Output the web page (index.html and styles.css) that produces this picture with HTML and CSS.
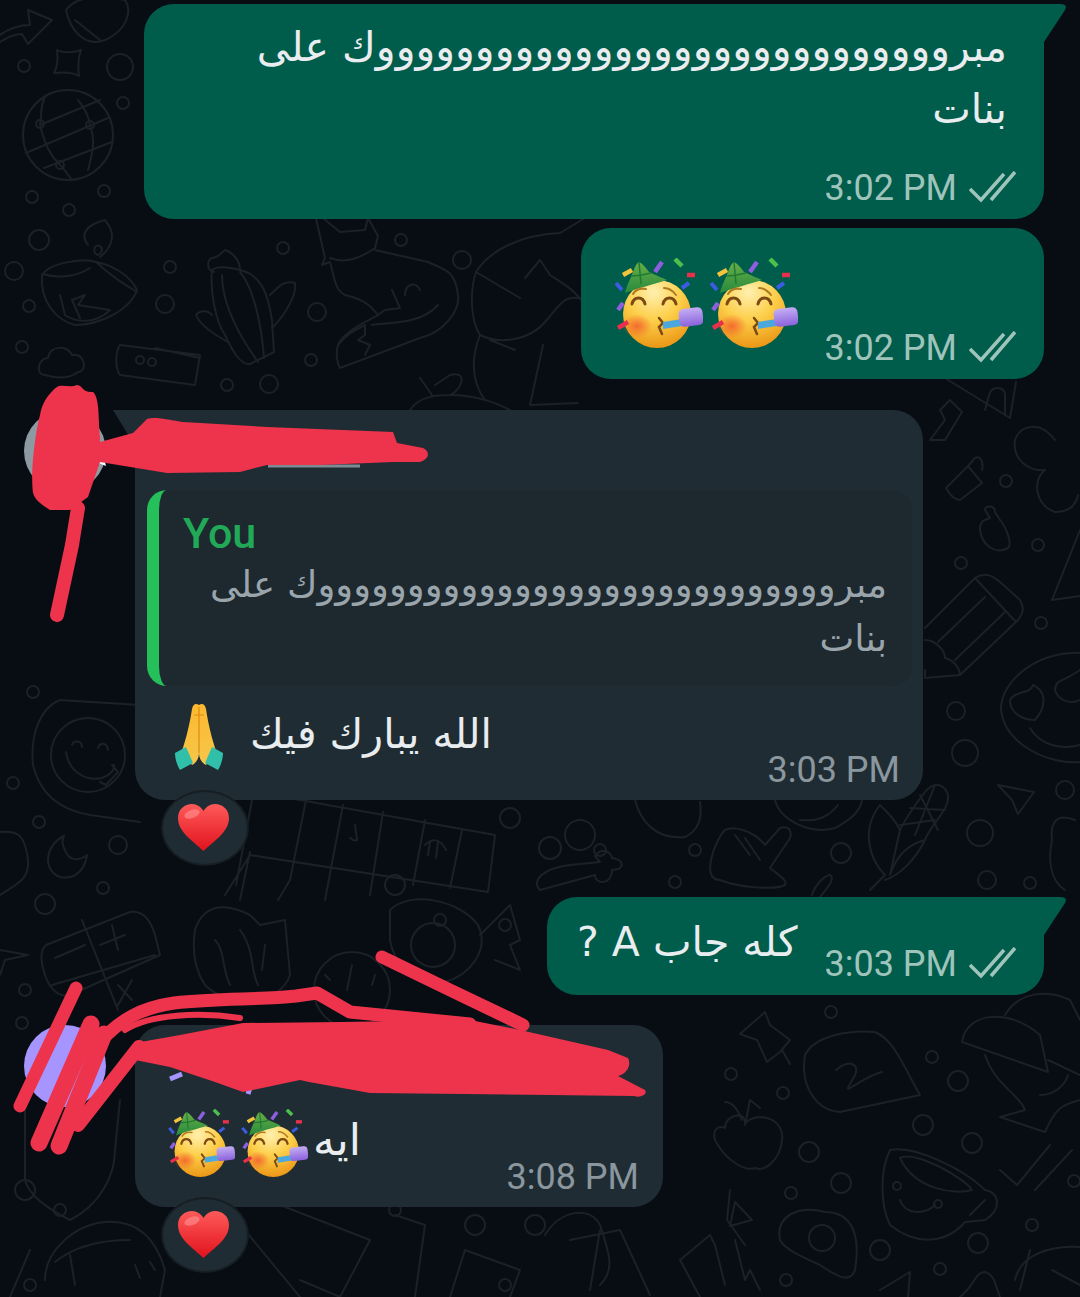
FILE: index.html
```html
<!DOCTYPE html>
<html lang="en">
<head>
    <meta charset="UTF-8">
    <meta name="viewport" content="width=device-width, initial-scale=1.0">
    <title>Chat</title>
    <link rel="stylesheet" href="styles.css">
</head>
<body>
    <!-- shared drawings -->
    <svg class="defs" aria-hidden="true">
        <defs>
            <radialGradient id="faceFill" cx="0.45" cy="0.18" r="0.9">
                <stop offset="0" stop-color="#fff0b0"/>
                <stop offset="0.45" stop-color="#fdcf4a"/>
                <stop offset="1" stop-color="#e88c0c"/>
            </radialGradient>
            <radialGradient id="cheekFill">
                <stop offset="0" stop-color="#f4582c" stop-opacity="0.8"/>
                <stop offset="1" stop-color="#f4582c" stop-opacity="0"/>
            </radialGradient>
            <linearGradient id="hatFill" x1="0" y1="0" x2="0" y2="1">
                <stop offset="0" stop-color="#6aae48"/>
                <stop offset="1" stop-color="#268a3c"/>
            </linearGradient>
            <linearGradient id="heartFill" x1="0" y1="0" x2="0" y2="1">
                <stop offset="0" stop-color="#ff5a5a"/>
                <stop offset="1" stop-color="#e0121c"/>
            </linearGradient>
            <linearGradient id="handFill" x1="0" y1="0" x2="0" y2="1">
                <stop offset="0" stop-color="#fdb92e"/>
                <stop offset="1" stop-color="#f6c64a"/>
            </linearGradient>
            <linearGradient id="rollFill" x1="0" y1="0" x2="0" y2="1">
                <stop offset="0" stop-color="#c4aef4"/>
                <stop offset="1" stop-color="#8a62dc"/>
            </linearGradient>
            <symbol id="party" viewBox="0 0 90 90">
                <circle cx="44" cy="56" r="34" fill="url(#faceFill)"/>
                <ellipse cx="24" cy="68" rx="15" ry="12" fill="url(#cheekFill)"/>
                <path d="M12 35 C14 26 18 20 20 14 C22 8 24 5 26 4 C30 6 33 10 36 14 C42 17 50 20 54 22 C42 26 25 30 12 35Z" fill="url(#hatFill)"/>
                <path d="M26 4 L28 26 M18 18 C26 18 34 16 38 15" stroke="#1f7a32" stroke-width="1.5" fill="none"/>
                <path d="M10 17 L19 12" stroke="#f2c43c" stroke-width="4.5"/>
                <path d="M42 14 L49 4" stroke="#8d5fe0" stroke-width="4.5"/>
                <path d="M62 1 L69 8" stroke="#4cc04c" stroke-width="4.5"/>
                <path d="M74 17 H82" stroke="#e8304c" stroke-width="4.5"/>
                <path d="M69 30 L76 25" stroke="#3a5ce0" stroke-width="4"/>
                <path d="M3 25 L9 32" stroke="#3a5ce0" stroke-width="4"/>
                <path d="M5 52 L10 45" stroke="#8d5fe0" stroke-width="4.5"/>
                <path d="M5 70 L15 64" stroke="#e8304c" stroke-width="4.5"/>
                <path d="M19 46 C21 38 30 38 32 46 M50 46 C52 38 61 38 63 46" stroke="#7c4a12" stroke-width="3" fill="none" stroke-linecap="round"/>
                <path d="M20 36 C23 31 28 30 33 31 M51 30 C56 30 60 33 63 37" stroke="#b07a20" stroke-width="2" fill="none" stroke-linecap="round"/>
                <path d="M46 60 L50 65 L46 69 L49 76" stroke="#7c4a12" stroke-width="2.5" fill="none" stroke-linecap="round"/>
                <path d="M50 64 L69 61 L69 68 L50 71Z" fill="#4aa8dc"/>
                <rect x="66" y="50" width="24" height="18" rx="5" transform="rotate(-7 78 59)" fill="url(#rollFill)"/>
            </symbol>
            <symbol id="heart" viewBox="0 0 53 48">
                <path d="M26.5 47 C16 37 1 28 1 14 C1 5 8 0 15 0 C20 0 24 3 26.5 7 C29 3 33 0 38 0 C45 0 52 5 52 14 C52 28 37 37 26.5 47Z" fill="url(#heartFill)"/>
                <ellipse cx="15" cy="10" rx="8" ry="4" fill="#ff9a9a" opacity="0.55" transform="rotate(-20 15 10)"/>
            </symbol>
        </defs>
    </svg>

    <!-- wallpaper doodles -->
    <svg class="doodles" viewBox="0 0 1080 1297" aria-hidden="true">
        <g fill="none" stroke="#1b2127" stroke-width="2" stroke-linecap="round" stroke-linejoin="round">
            <!-- dots -->
            <circle cx="24" cy="66" r="6"/><circle cx="120" cy="67" r="13"/><circle cx="123" cy="103" r="6"/>
            <circle cx="32" cy="197" r="6"/><circle cx="104" cy="191" r="6"/><circle cx="69" cy="210" r="6"/>
            <circle cx="39" cy="240" r="10"/><circle cx="14" cy="271" r="9"/><circle cx="29" cy="306" r="6"/>
            <circle cx="22" cy="347" r="6"/><circle cx="170" cy="267" r="6"/><circle cx="165" cy="304" r="9"/>
            <circle cx="283" cy="248" r="6"/><circle cx="317" cy="312" r="9"/><circle cx="311" cy="360" r="6"/>
            <circle cx="227" cy="385" r="6"/><circle cx="269" cy="384" r="9"/><circle cx="401" cy="240" r="6"/>
            <circle cx="462" cy="260" r="9"/><circle cx="1006" cy="481" r="6"/><circle cx="1038" cy="545" r="6"/>
            <circle cx="961" cy="563" r="6"/><circle cx="1041" cy="623" r="6"/><circle cx="956" cy="711" r="9"/>
            <circle cx="965" cy="753" r="13"/><circle cx="1065" cy="790" r="9"/><circle cx="980" cy="833" r="13"/>
            <circle cx="987" cy="880" r="9"/><circle cx="1030" cy="883" r="6"/><circle cx="33" cy="692" r="6"/>
            <circle cx="13" cy="783" r="6"/><circle cx="39" cy="822" r="6"/><circle cx="118" cy="845" r="9"/>
            <circle cx="103" cy="888" r="6"/><circle cx="45" cy="904" r="10"/><circle cx="25" cy="990" r="6"/>
            <circle cx="22" cy="1023" r="6"/><circle cx="831" cy="1012" r="6"/><circle cx="731" cy="1074" r="6"/>
            <circle cx="783" cy="1093" r="6"/><circle cx="932" cy="1057" r="6"/><circle cx="958" cy="1081" r="10"/>
            <circle cx="923" cy="1125" r="10"/><circle cx="972" cy="1143" r="10"/><circle cx="809" cy="1152" r="10"/>
            <circle cx="841" cy="1183" r="10"/><circle cx="791" cy="1193" r="6"/><circle cx="1074" cy="1181" r="6"/>
            <circle cx="1032" cy="1225" r="6"/><circle cx="978" cy="1243" r="10"/><circle cx="880" cy="1250" r="10"/>
            <circle cx="940" cy="1269" r="6"/><circle cx="786" cy="1280" r="6"/><circle cx="600" cy="850" r="6"/>
            <circle cx="695" cy="850" r="6"/><circle cx="675" cy="882" r="6"/><circle cx="841" cy="853" r="10"/>
            <circle cx="510" cy="818" r="10"/><circle cx="535" cy="1225" r="10"/><circle cx="395" cy="885" r="10"/>
            <circle cx="440" cy="920" r="6"/><circle cx="505" cy="925" r="6"/><circle cx="25" cy="1190" r="10"/>
            <circle cx="60" cy="1210" r="6"/><circle cx="395" cy="1210" r="6"/><circle cx="475" cy="1225" r="10"/>
            <circle cx="505" cy="1285" r="6"/><circle cx="30" cy="1285" r="6"/>
            <!-- globe -->
            <circle cx="68" cy="135" r="45"/>
            <path d="M40 125 L100 100 M26 153 L108 118 M44 168 L112 142 M40 125 C42 112 40 105 46 95 M40 125 C45 145 50 155 60 165 M90 125 C88 112 82 105 78 100 M90 125 C96 142 92 155 88 170 M60 165 C65 170 68 175 72 180"/>
            <circle cx="40" cy="124" r="4"/><circle cx="90" cy="125" r="4"/><circle cx="60" cy="165" r="4"/>
            <!-- sparkle and top shapes -->
            <path d="M57 50 C62 53 74 53 81 50 C78 58 78 68 79 76 C72 72 62 72 54 73 C58 66 58 58 57 50Z"/>
            <path d="M0 35 C10 28 20 25 30 25 L28 10 L52 20 L28 44 L22 34 C14 34 6 38 0 42"/>
            <path d="M66 10 C75 -2 95 -6 125 0 C132 10 128 30 105 40 C85 48 70 30 66 10Z M75 20 L100 40"/>
            <!-- lamp -->
            <path d="M88 245 C80 235 85 225 105 220 C115 232 115 245 100 257 M95 247 C92 255 100 258 102 250 C102 246 98 244 95 247"/>
            <path d="M42 275 C50 262 85 258 96 262 C112 265 130 275 137 290 C130 310 100 325 75 325 C55 320 40 300 42 275Z M43 274 C55 278 75 278 90 268 M96 262 C110 275 125 285 137 292"/>
            <path d="M60 295 L65 315 C75 322 95 325 110 310 L78 305 L85 295 L72 300 M72 300 L80 318"/>
            <!-- cloud and box -->
            <path d="M45 375 C35 375 38 358 48 358 C50 345 68 345 72 355 C85 352 88 372 78 372 C68 380 55 378 45 375Z"/>
            <path d="M120 345 L200 355 L195 385 L120 375 C115 368 115 352 120 345Z M155 348 L200 358"/>
            <circle cx="140" cy="360" r="4"/><circle cx="152" cy="362" r="4"/>
            <!-- cactus -->
            <path d="M212 270 C218 265 232 268 240 270 C262 275 268 295 272 320 L274 352 L250 364 C240 365 232 350 225 335 C215 320 210 290 212 270Z M222 275 C222 300 235 330 258 362 M240 272 C255 290 262 330 264 358"/>
            <path d="M270 295 C280 285 285 280 295 283 C297 295 285 315 272 328 M228 342 C215 335 200 325 196 315 C200 310 208 310 212 315"/>
            <path d="M214 272 C205 270 208 258 212 258 C218 258 222 252 225 250 C232 252 240 260 240 270"/>
            <!-- fox -->
            <path d="M315 215 C320 235 322 245 325 258 L322 265 L330 262 C335 280 335 290 345 295 C365 300 370 305 378 315 L385 310 L400 308 L392 290 M378 315 C370 320 345 330 338 345 C335 355 338 365 340 368 L420 338 C445 332 460 310 458 295 C455 270 445 270 428 262 L375 250"/>
            <path d="M338 345 C345 335 355 330 365 325 L365 335 L358 340 L370 345 L365 355 M372 325 C390 322 420 325 438 305 M405 295 C405 285 415 280 420 290"/>
            <path d="M330 258 C340 262 355 262 375 248 L378 236 L368 218 L365 230 L340 232 L318 214"/>
            <!-- bird shape -->
            <path d="M476 272 C490 250 520 235 560 233 L590 215 M476 272 L520 298 M476 272 C470 290 470 320 480 335 C500 345 530 340 545 322 C560 305 565 292 585 300 M525 278 L540 260 L550 275 C565 285 575 290 585 305 M480 335 C472 355 470 380 485 400 M515 350 L490 340 M543 345 L530 405 L578 403"/>
            <path d="M410 410 C420 395 440 395 450 395 C460 392 470 370 450 375 L435 385 M432 395 L420 378 M450 395 C480 395 500 405 510 410"/>
            <!-- padlocks, pencil -->
            <path d="M946 488 L968 466 L982 483 L960 500 C955 500 950 495 946 488Z M968 466 L975 458 C980 455 984 462 982 470"/>
            <path d="M980 530 C980 520 985 520 990 518 L985 510 C985 505 995 505 995 512 L1000 520 C1008 530 1012 545 1008 548 C995 555 982 545 980 530Z"/>
            <path d="M925 628 L975 578 C985 572 992 575 1000 582 L1020 600 C1024 608 1024 612 1018 620 L960 675 L925 678 L925 670 M975 578 L1016 622 M938 642 L985 597 M955 660 L1005 612 M925 640 C935 640 945 650 945 658 C958 662 960 672 960 675"/>
            <path d="M1055 440 C1040 420 1020 425 1015 440 C1012 460 1030 472 1045 470 C1032 480 1035 505 1055 512 C1070 512 1076 505 1078 495"/>
            <path d="M1080 530 L1052 600 L1080 596"/>
            <path d="M930 440 L945 420 L940 410 L950 400 L962 412 L945 440 L930 440"/>
            <path d="M940 375 L1010 418 L1016 382 M985 410 L990 392 C995 385 1005 388 1005 395 L1005 415"/>
            <!-- smiley with heart eyes -->
            <path d="M1080 653 C1040 650 1000 680 1001 710 C1005 745 1050 765 1080 762"/>
            <path d="M1010 700 C1015 690 1030 695 1033 685 C1045 690 1048 705 1035 720 C1025 720 1010 715 1010 700Z M1055 690 C1055 680 1065 680 1072 675 L1080 670 M1055 690 C1058 700 1070 705 1080 700 M1030 728 C1040 745 1060 750 1080 745"/>
            <path d="M998 785 L1034 792 L1018 814 L1012 800Z"/>
            <path d="M1075 820 C1055 812 1050 825 1052 840 C1048 860 1050 880 1065 890"/>
            <!-- corn -->
            <path d="M870 890 L885 875 C870 860 860 830 880 805 C890 815 895 820 900 830 C905 820 915 805 925 792 C935 780 945 785 948 795 C950 810 930 825 925 840 C915 860 900 875 885 880 M900 830 L890 875 M925 840 C905 845 895 860 890 875"/>
            <path d="M910 808 L945 810 M920 795 L938 830 M935 785 L915 835 M900 825 L935 820"/>
            <!-- hand, people -->
            <path d="M720 880 C700 880 715 840 725 830 C735 825 755 832 765 845 L780 828 C790 825 792 832 790 838 L770 868 C778 875 788 880 785 885 C775 890 740 888 720 880Z M735 835 L750 855 M745 838 L760 860"/>
            <circle cx="580" cy="835" r="15"/><circle cx="550" cy="848" r="11"/>
            <path d="M540 890 C530 880 545 868 570 865 L600 862 L595 856 C600 848 610 850 612 858 C625 860 625 870 612 870 C612 885 595 885 595 875 L540 890"/>
            <path d="M635 800 C640 820 655 840 685 837 C700 830 702 815 700 802"/>
            <path d="M775 800 C780 820 810 835 835 828 C850 820 860 812 862 800 M800 820 C820 822 830 815 838 805"/>
            <path d="M812 895 C815 885 825 875 830 875 C835 878 830 885 820 897"/>
            <!-- crossword -->
            <path d="M272 795 L495 835 L488 892 L250 855 L225 895 M252 800 L236 885 M306 800 L290 880 L278 900 M343 805 L325 900 M383 812 L370 895 M425 820 L413 885 M462 830 L450 888 M250 852 L240 900"/>
            <path d="M355 825 L357 840 C352 842 352 838 350 838 M425 845 C432 838 440 838 446 850 M430 842 L428 855 M438 842 L436 858"/>
            <!-- bubble with tongue smile, moon, calculator -->
            <path d="M140 705 L60 700 C40 708 30 735 33 765 C40 795 60 810 90 815 L140 822"/>
            <circle cx="88" cy="755" r="37"/>
            <path d="M66 752 C68 770 85 782 102 778 C110 775 115 770 114 765 M112 765 L118 772 L106 785 L100 782 M72 745 C73 740 82 740 82 747 M98 748 C100 742 107 742 108 750"/>
            <path d="M64 836 C45 845 42 870 60 877 C75 880 85 870 87 855 C78 862 68 860 65 850 C62 845 62 840 64 836Z"/>
            <path d="M0 832 C18 830 25 835 28 860 C30 880 15 885 0 895"/>
            <path d="M0 950 L28 955 L5 960 L0 975"/>
            <path d="M46 945 L130 912 C142 910 150 918 155 935 L160 955 L70 995 C60 998 50 990 45 975 C40 960 40 950 46 945Z M82 920 L118 1010 M52 985 L155 955 M55 958 L85 945 M100 945 L125 935 M112 925 L118 950 M118 985 L132 1000 M132 980 L118 1005"/>
            <!-- tomb, lid, watch -->
            <path d="M195 930 C205 900 230 905 250 915 L260 925 L285 920 L290 975 C280 1005 230 1010 205 985 C195 970 192 950 195 930Z M215 940 C225 950 222 970 230 985 M240 930 C255 950 250 970 258 985 M265 945 L262 970"/>
            <circle cx="352" cy="990" r="38"/>
            <path d="M352 965 L347 990 M325 975 L330 980 M375 975 L372 985"/>
            <path d="M390 910 C410 890 460 900 478 925 C490 950 470 975 445 982 C420 982 395 970 390 940Z"/>
            <circle cx="433" cy="945" r="22"/>
            <path d="M480 935 L510 905 L520 940 L510 945 L520 970 L495 960"/>
            <!-- shield, taco -->
            <path d="M25 1100 L25 1180 C30 1200 60 1215 70 1220 C100 1205 115 1175 115 1150 L120 1100"/>
            <path d="M45 1280 C45 1250 75 1225 105 1222 C135 1220 155 1235 165 1270 L160 1297 M55 1262 C70 1250 95 1240 130 1240 M70 1255 L75 1285 M135 1265 L140 1278 M150 1262 L155 1270"/>
            <path d="M10 1297 L30 1250 M220 1200 L300 1297 M280 1205 L370 1240 L340 1297 L300 1280 M395 1215 L425 1225 L415 1297 M450 1297 L465 1250 L520 1270 L510 1297 M570 1240 L620 1230 L650 1295 M600 1230 L590 1290"/>
            <path d="M545 1235 C560 1210 590 1205 600 1225 C610 1255 615 1270 600 1285"/>
            <!-- pin, sign, apple, cup, cap, checks, egg -->
            <path d="M740 1034 L765 1012 L770 1025 L790 1040 L780 1052 L767 1062 L757 1040 Z M782 1050 L790 1064"/>
            <path d="M805 1055 C815 1035 850 1030 875 1032 C895 1040 905 1070 920 1095 L840 1112 C815 1110 800 1085 805 1055Z"/>
            <path d="M836 1070 C850 1058 860 1065 855 1075 C850 1085 845 1090 850 1088 C860 1082 870 1075 882 1072"/>
            <path d="M725 1128 C725 1115 745 1110 745 1123 C760 1110 785 1120 782 1140 C780 1160 765 1172 755 1168 C745 1172 725 1160 715 1140 C712 1130 718 1125 725 1128Z M745 1125 L750 1100 L760 1108 M725 1102 C735 1102 740 1115 742 1120"/>
            <path d="M890 1150 C915 1145 965 1170 985 1190 C1000 1192 1002 1210 985 1220 L965 1222 C945 1245 915 1245 890 1225 C880 1205 880 1170 890 1150Z M900 1158 C915 1150 965 1178 972 1190 C955 1195 915 1190 900 1158Z M900 1200 C905 1215 925 1215 935 1205 M970 1215 L985 1200"/>
            <circle cx="897" cy="1186" r="4"/><circle cx="938" cy="1204" r="4"/>
            <path d="M962 1042 C965 1015 1005 1005 1040 1035 L1048 1072 L962 1042Z M1005 1015 C1020 990 1050 990 1070 1000 L1080 1020 M1048 1060 L1080 1075 M985 1055 C995 1085 1020 1095 1025 1110 L1000 1117 L1045 1132 C1055 1110 1060 1105 1080 1100 M1040 1095 C1055 1095 1065 1085 1068 1075"/>
            <path d="M1000 1170 L1017 1185 L1050 1145 M1035 1190 L1072 1150"/>
            <path d="M780 1240 C775 1215 800 1205 825 1212 C855 1212 860 1240 855 1270 C850 1285 835 1275 820 1265 C805 1258 785 1250 780 1240Z"/>
            <circle cx="822" cy="1238" r="13"/>
            <path d="M700 1297 L680 1260 L710 1235 L715 1245 L725 1285 M735 1240 L745 1280 L750 1270 L760 1290 M730 1190 L727 1220 L745 1245"/>
            <path d="M735 1202 L752 1220 L730 1226Z"/>
            <path d="M1015 1280 C1020 1255 1050 1245 1080 1247 M1030 1250 L1020 1290 M1052 1270 L1080 1285"/>
            <path d="M880 1290 L910 1272 L908 1297"/>
            <path d="M960 1297 C975 1285 975 1272 985 1272 C995 1275 995 1285 1000 1297"/>
        </g>
    </svg>

    <main class="chat">
        <div class="msg-out bubble-long has-tail">
            <p class="text" dir="rtl">مبروووووووووووووووووووووووووووووك على<br>بنات</p>
            <div class="meta meta-own">
                <span class="time">3:02 PM</span>
                <svg class="ticks" viewBox="0 0 48 32"><path d="M1 18 L12 29 L35 3 M22 29 L46 1" fill="none" stroke="#9ec4bb" stroke-width="3.5"/></svg>
            </div>
        </div>

        <div class="msg-out bubble-emoji">
            <div class="emoji-row">
                <svg class="party"><use href="#party"/></svg>
                <svg class="party"><use href="#party"/></svg>
            </div>
            <div class="meta">
                <span class="time">3:02 PM</span>
                <svg class="ticks" viewBox="0 0 48 32"><path d="M1 18 L12 29 L35 3 M22 29 L46 1" fill="none" stroke="#9ec4bb" stroke-width="3.5"/></svg>
            </div>
        </div>

        <div class="row-in row-first">
            <div class="avatar avatar-grey"></div>
            <div class="msg-wrap">
                <div class="msg-in bubble-reply has-tail-in">
                    <div class="name-space"></div>
                    <div class="quote">
                        <div class="quote-name">You</div>
                        <p class="quote-text" dir="rtl">مبروووووووووووووووووووووووووووووك على<br>بنات</p>
                    </div>
                    <div class="reply-body">
                        <svg class="pray" viewBox="0 0 53 67">
                            <path d="M27 2 C24 0 21 1 20 6 C18 20 14 36 10 48 L20 62 C24 60 27 56 27 50Z" fill="url(#handFill)"/>
                            <path d="M27 2 C30 0 33 1 34 6 C36 20 40 36 44 48 L34 62 C30 60 27 56 27 50Z" fill="url(#handFill)"/>
                            <path d="M27 4 V50 M22 12 H32" stroke="#dd8a18" stroke-width="1.2" fill="none"/>
                            <path d="M3 50 L14 44 L21 60 L8 67 C5 62 3 56 3 50Z M51 50 L40 44 L33 60 L46 67 C49 62 51 56 51 50Z" fill="#30bfa8"/>
                        </svg>
                        <span class="text reply-text" dir="rtl">الله يبارك فيك</span>
                        <span class="time time-in">3:03 PM</span>
                    </div>
                </div>
                <div class="reaction"><svg class="heart"><use href="#heart"/></svg></div>
            </div>
        </div>

        <div class="msg-out bubble-short has-tail">
            <span class="text" dir="rtl">كله جاب A ?</span>
            <div class="meta">
                <span class="time">3:03 PM</span>
                <svg class="ticks" viewBox="0 0 48 32"><path d="M1 18 L12 29 L35 3 M22 29 L46 1" fill="none" stroke="#9ec4bb" stroke-width="3.5"/></svg>
            </div>
        </div>

        <div class="row-in row-last">
            <div class="avatar avatar-purple"></div>
            <div class="msg-wrap">
                <div class="msg-in bubble-small">
                    <div class="name-space"></div>
                    <div class="small-body">
                        <svg class="party-small"><use href="#party"/></svg>
                        <svg class="party-small"><use href="#party"/></svg>
                        <span class="text small-text" dir="rtl">ايه</span>
                        <span class="time time-in">3:08 PM</span>
                    </div>
                </div>
                <div class="reaction"><svg class="heart"><use href="#heart"/></svg></div>
            </div>
        </div>
    </main>

    <!-- marker scribbles drawn over the names -->
    <svg class="scribbles" viewBox="0 0 1080 1297" aria-hidden="true">
        <path d="M96 462 L104 458 L106 466Z" fill="#ffffff"/>
        <path d="M268 466 H360" fill="none" stroke="#7f8b93" stroke-width="3"/>
        <path d="M170 1079 L182 1074 M248 1094 L252 1081 H262 C268 1081 268 1072 262 1070 M276 1068 L276 1080 M286 1068 L284 1080" fill="none" stroke="#a694ff" stroke-width="5"/>
        <path d="M610 1056 C618 1052 620 1062 612 1068 C620 1072 618 1080 610 1078" fill="none" stroke="#7f8b93" stroke-width="3"/>
        <g fill="#ee344c">
            <!-- first name and avatar -->
            <path d="M57 387 C62 384 70 388 77 385 C84 386 82 393 93 392 C100 398 98 420 100 437 L100 442 L133 433 L147 419 C155 416 170 420 183 422 L267 427 L393 432 L397 443 L423 448 C430 451 430 459 420 462 L393 462 L320 465 L267 465 L240 472 L167 473 L100 462 L88 497 L70 510 L50 510 C42 505 35 500 33 493 C30 470 36 430 40 415 C42 402 50 392 57 387Z"/>
            <!-- second name mass -->
            <path d="M135 1043 L180 1035 L243 1023 L340 1022 L470 1020 L520 1030 L608 1050 L628 1058 C632 1066 626 1074 618 1076 L645 1090 C648 1095 640 1098 634 1096 L370 1093 L309 1082 L300 1080 L243 1092 L215 1082 L170 1067 L135 1060Z"/>
        </g>
        <g fill="none" stroke="#ee344c" stroke-linecap="round" stroke-linejoin="round">
            <path d="M78 508 L72 545 L57 615" stroke-width="14"/>
            <path d="M76 988 L20 1106" stroke-width="13"/>
            <path d="M91 1024 L39 1143" stroke-width="17"/>
            <path d="M104 1034 L59 1146" stroke-width="17"/>
            <path d="M139 1047 L78 1125" stroke-width="14"/>
            <path d="M100 1042 C120 1020 140 1008 174 1003 C220 998 260 1000 296 996 L317 993 L350 1012 L470 1024" stroke-width="13"/>
            <path d="M125 1030 C150 1014 200 1012 240 1018" stroke-width="6"/>
            <path d="M382 957 L450 990 L523 1025" stroke-width="13"/>
        </g>
    </svg>
</body>
</html>
```

FILE: styles.css
```css
* {
    box-sizing: border-box;
}
body {
    margin: 0;
    width: 1080px;
    height: 1297px;
    overflow: hidden;
    position: relative;
    background-color: #070d13;
    font-family: 'Roboto', sans-serif;
    color: #e9edef;
}
p {
    margin: 0;
}
.defs {
    position: absolute;
    width: 0;
    height: 0;
}
.doodles,
.scribbles {
    position: absolute;
    left: 0;
    top: 0;
    width: 1080px;
    height: 1297px;
}
.scribbles {
    pointer-events: none;
}
.chat {
    position: relative;
    display: flex;
    flex-direction: column;
    padding-top: 4px;
}

/* outgoing */
.msg-out {
    position: relative;
    align-self: flex-end;
    margin-right: 36px;
    background-color: #005c4b;
    border-radius: 30px;
}
.has-tail {
    border-top-right-radius: 0;
}
.has-tail::after {
    content: "";
    position: absolute;
    left: 100%;
    top: 0;
    width: 24px;
    height: 38px;
    background-color: #005c4b;
    clip-path: path('M0 0 H17 Q24 0 21 6 L0 38 Z');
}
.bubble-long {
    width: 900px;
    padding: 12px 27px 11px;
}
.bubble-long .text {
    padding-right: 10px;
}
.bubble-emoji {
    display: flex;
    align-items: flex-end;
    justify-content: space-between;
    width: 463px;
    height: 151px;
    margin-top: 9px;
    padding: 0 27px 11px 32px;
}
.emoji-row {
    display: flex;
    gap: 5px;
    margin-bottom: 20px;
}
.bubble-short {
    display: flex;
    align-items: flex-end;
    justify-content: space-between;
    width: 497px;
    height: 98px;
    margin-top: 31px;
    padding: 0 27px 11px 30px;
}
.bubble-short .text {
    margin-bottom: 11px;
}

/* text */
.text {
    font-family: 'DejaVu Sans', sans-serif;
    font-size: 41px;
    line-height: 62px;
    color: #e9edef;
}
.meta {
    display: flex;
    align-items: center;
    gap: 12px;
    height: 42px;
}
.meta-own {
    justify-content: flex-end;
    margin-top: 26px;
}
.time {
    margin-top: 2px;
    font-size: 36px;
    line-height: 42px;
    color: #9fc4bb;
    white-space: nowrap;
}
.time-in {
    color: #8b979f;
    margin-left: auto;
}
.ticks {
    width: 48px;
    height: 32px;
}
.party {
    width: 90px;
    height: 90px;
}

/* incoming */
.row-in {
    display: flex;
    padding-left: 24px;
}
.row-first {
    margin-top: 31px;
}
.row-last {
    margin-top: 30px;
}
.avatar {
    width: 82px;
    height: 82px;
    margin-right: 29px;
    border-radius: 50%;
}
.avatar-grey {
    background-color: #8d9aa4;
}
.avatar-purple {
    background-color: #a694ff;
}
.msg-wrap {
    display: flex;
    flex-direction: column;
}
.msg-in {
    position: relative;
    background-color: #202c33;
    border-radius: 30px;
}
.has-tail-in {
    border-top-left-radius: 0;
}
.has-tail-in::before {
    content: "";
    position: absolute;
    right: 100%;
    top: 0;
    border-top: 36px solid #202c33;
    border-left: 22px solid transparent;
}
.bubble-reply {
    width: 788px;
    height: 390px;
}
.name-space {
    height: 80px;
}
.quote {
    height: 196px;
    margin: 0 11px 0 12px;
    padding: 18px 25px 0 24px;
    background-color: #1d282f;
    border-left: 12px solid #25c05a;
    border-radius: 20px;
}
.quote-name {
    font-size: 43px;
    font-weight: 500;
    line-height: 50px;
    color: #21a957;
}
.quote-text {
    font-family: 'DejaVu Sans', sans-serif;
    font-size: 37px;
    line-height: 54px;
    color: #9aa5ab;
}
.reply-body {
    display: flex;
    align-items: flex-start;
    height: 114px;
    padding: 17px 23px 0 37px;
}
.pray {
    width: 53px;
    height: 67px;
}
.reply-text {
    margin-left: 25px;
}
.reply-body .time {
    align-self: flex-end;
    margin-bottom: 9px;
}
.reaction {
    display: flex;
    align-items: center;
    justify-content: center;
    width: 88px;
    height: 76px;
    margin: -10px 0 0 26px;
    padding-right: 3px;
    background-color: #202c33;
    border: 2px solid #161e24;
    border-radius: 50%;
    z-index: 1;
}
.heart {
    width: 53px;
    height: 48px;
}
.bubble-small {
    width: 528px;
    height: 182px;
}
.small-body {
    display: flex;
    align-items: flex-start;
    height: 102px;
    padding: 4px 24px 0 32px;
}
.party-small {
    width: 68px;
    height: 68px;
    margin-right: 5px;
}
.small-text {
    font-size: 44px;
}
.small-body .time {
    align-self: flex-end;
    margin-bottom: 9px;
}
```
